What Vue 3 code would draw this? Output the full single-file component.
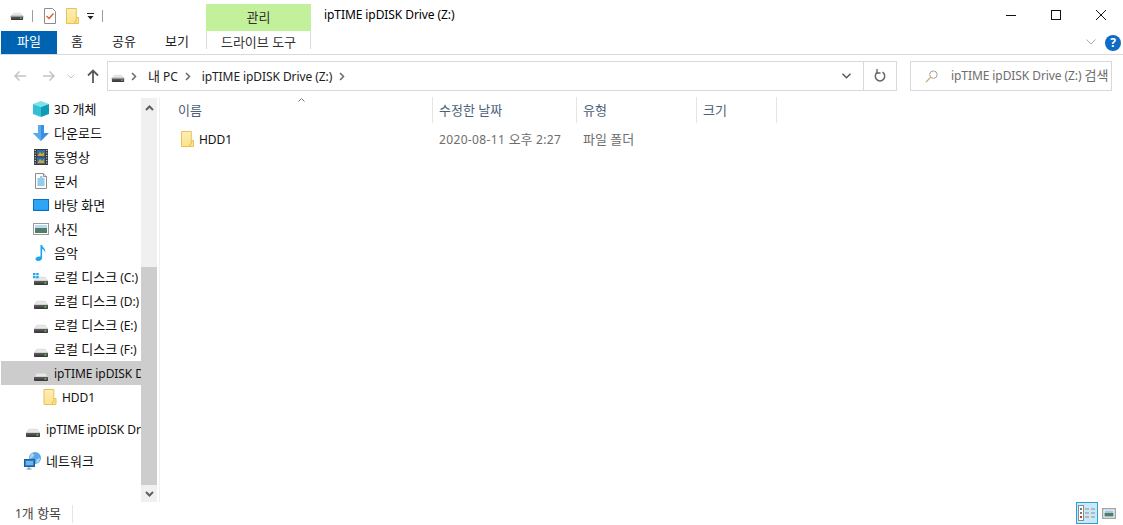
<script setup>
import { h } from 'vue'

// hangul is set a bit larger than latin, like the original system font
const T = (props) =>
  h('span', props.t.split(/([가-힣]+(?: [가-힣]+)*)/).filter(Boolean).map((part) =>
    /[가-힣]/.test(part) ? h('span', { class: 'ko' }, part) : part
  ))
T.props = ['t']

const nav = [
  { label: '3D 개체', icon: 'cube' },
  { label: '다운로드', icon: 'down' },
  { label: '동영상', icon: 'film' },
  { label: '문서', icon: 'doc' },
  { label: '바탕 화면', icon: 'desk' },
  { label: '사진', icon: 'pic' },
  { label: '음악', icon: 'music' },
  { label: '로컬 디스크 (C:)', icon: 'win' },
  { label: '로컬 디스크 (D:)', icon: 'drive' },
  { label: '로컬 디스크 (E:)', icon: 'drive' },
  { label: '로컬 디스크 (F:)', icon: 'drive' },
  { label: 'ipTIME ipDISK Drive (Z:)', icon: 'drive', active: true },
  { label: 'HDD1', icon: 'folder', child: true }
]

const columns = [
  { label: '이름', width: 263 },
  { label: '수정한 날짜', width: 144 },
  { label: '유형', width: 120 },
  { label: '크기', width: 80 }
]
</script>

<template>
  <div class="win">
    <svg class="sprite" width="0" height="0">
      <defs>
        <linearGradient id="hdd" x1="0" y1="0" x2="0" y2="1">
          <stop offset="0" stop-color="#6a6a6a" />
          <stop offset="1" stop-color="#333" />
        </linearGradient>
        <linearGradient id="fold" x1="0" y1="0" x2="0" y2="1">
          <stop offset="0" stop-color="#fdeeb8" />
          <stop offset="1" stop-color="#fde28a" />
        </linearGradient>
        <symbol id="drive" viewBox="0 0 16 16">
          <path d="M1.500 11.500 3.800 8.300h8.400l2.300 3.200z" fill="#e9e9e9" stroke="#cfcfcf" stroke-width=".6" />
          <rect x="1" y="11" width="14" height="5" rx=".8" fill="url(#hdd)" />
          <rect x="1" y="11" width="14" height="1" fill="#d2d2d2" />
          <rect x="11.500" y="13.300" width="1.800" height="1.300" fill="#5ddc55" />
        </symbol>
        <symbol id="win" viewBox="0 0 16 16">
          <path d="M1.500 11.500 3.800 8.300h8.400l2.300 3.200z" fill="#e9e9e9" stroke="#cfcfcf" stroke-width=".6" />
          <rect x="1" y="11" width="14" height="5" rx=".8" fill="url(#hdd)" />
          <rect x="1" y="11" width="14" height="1" fill="#d2d2d2" />
          <rect x="11.500" y="13.300" width="1.800" height="1.300" fill="#5ddc55" />
          <path d="M0 4h2.500v2.300H0zM3.200 4h2.500v2.300H3.200zM0 7h2.500v2.300H0zM3.200 7h2.500v2.300H3.200z" fill="#1ea7ee" />
        </symbol>
        <symbol id="folder" viewBox="0 0 13 16">
          <path d="M.5.500h9.800v9h2.200v6H.5z" fill="url(#fold)" stroke="#e8c352" />
          <path d="M10.300 9.500v3.500H9v2.500" fill="none" stroke="#e8c352" />
        </symbol>
        <symbol id="cube" viewBox="0 0 16 16">
          <path d="M8 0 16 3 8 6 0 3z" fill="#7fe0e8" />
          <path d="M0 3 8 6v10L0 13z" fill="#35bfd6" />
          <path d="M16 3 8 6v10l8-3z" fill="#0f9bb8" />
        </symbol>
        <symbol id="down" viewBox="0 0 16 16">
          <path d="M5 0h6v8h5l-8 8-8-8h5z" fill="#3a8fe0" />
          <path d="M5 0h3v16L0 8h5z" fill="#5aa9ee" />
        </symbol>
        <symbol id="film" viewBox="0 0 16 16">
          <rect x="1" y="0" width="14" height="16" fill="#3c3c3c" />
          <path d="M1.800 1h1v1h-1zM1.800 3.500h1v1h-1zM1.800 6h1v1h-1zM1.800 8.500h1v1h-1zM1.800 11h1v1h-1zM1.800 13.500h1v1h-1zM13.200 1h1v1h-1zM13.200 3.500h1v1h-1zM13.200 6h1v1h-1zM13.200 8.500h1v1h-1zM13.200 11h1v1h-1zM13.200 13.500h1v1h-1z" fill="#e8e8e8" />
          <rect x="4" y="1" width="8" height="6.500" fill="#2d6fb0" />
          <rect x="4" y="8.500" width="8" height="6.500" fill="#2d6fb0" />
          <path d="M5 6 7 3l2 2 2-2v4H5zM5 13l2-3 2 2 2-2v4H5z" fill="#d3a32b" />
        </symbol>
        <symbol id="doc" viewBox="0 0 16 16">
          <path d="M2.500.5h8l3 3v12h-11z" fill="#fdfdfd" stroke="#8c8c8c" />
          <path d="M10.500.5v3h3" fill="#e4e4e4" stroke="#8c8c8c" />
          <path d="M7 4h2.500M4.500 6h7M4.500 8h7M4.500 10h7M4.500 12h7" stroke="#2a9ad8" fill="none" />
        </symbol>
        <symbol id="desk" viewBox="0 0 16 16">
          <rect x="0" y="2" width="16" height="12" fill="#0b6fc6" />
          <rect x="1" y="3" width="14" height="9.800" fill="#2ea6f6" />
        </symbol>
        <symbol id="pic" viewBox="0 0 16 16">
          <rect x=".5" y="2.500" width="15" height="11" fill="#fff" stroke="#9a9a9a" />
          <rect x="2" y="4" width="12" height="4" fill="#bcd9ef" />
          <rect x="2" y="7" width="12" height="5" fill="#4f7f6a" />
        </symbol>
        <symbol id="music" viewBox="0 0 16 16">
          <path d="M7.500 0h1.600c.3 2.600 3.900 3.300 3 7.500-.5-2-2-3.300-3-3.500v9c0 2-2 3-4 3-1.500 0-2.600-.8-2.600-2 0-1.500 1.800-2.600 3.600-2.600.5 0 1 .1 1.400.2z" fill="#1aa5ef" />
        </symbol>
        <symbol id="net" viewBox="0 0 18 18">
          <circle cx="11" cy="6" r="6" fill="#5ba6e6" />
          <path d="M8 1c2 1 3 3 1 4S6 8 6 6s1-4 2-5zM13 7l3-1c0 3-2 5-3 5s-1-2 0-4z" fill="#a8d4f2" />
          <rect x="0.500" y="7.500" width="10" height="7" fill="#2f7ec8" stroke="#1d5f9c" />
          <rect x="2" y="9" width="7" height="4" fill="#6fb6ea" />
          <path d="M5 15v1.500M2.500 17h5" stroke="#6f93ae" stroke-width="1.200" />
        </symbol>
      </defs>
    </svg>

    <header class="titlebar">
      <div class="qat">
        <svg class="qat-drive"><use href="#drive" /></svg>
        <i class="qat-sep"></i>
        <svg class="qat-check" viewBox="0 0 12 16">
          <path d="M.5.5h8l3 3v12H.5z" fill="#fff" stroke="#8c8c8c" />
          <path d="M2.500 8 5 10.500 9.500 5.500" fill="none" stroke="#e2582b" stroke-width="1.300" />
        </svg>
        <svg class="qat-folder"><use href="#folder" /></svg>
        <svg class="qat-more" viewBox="0 0 7 7">
          <path d="M0 0h7v1H0zM.5 3h6L3.500 6.500z" fill="#222" />
        </svg>
        <i class="qat-sep last"></i>
      </div>
      <div class="context-tab"><T t="관리" /></div>
      <div class="title">ipTIME ipDISK Drive (Z:)</div>
      <div class="controls">
        <span class="ctl"><svg viewBox="0 0 10 10" width="10" height="10"><path d="M0 5.500h10" stroke="#111" /></svg></span>
        <span class="ctl"><svg viewBox="0 0 10 10" width="10" height="10"><rect x=".5" y=".5" width="9" height="9" fill="none" stroke="#111" /></svg></span>
        <span class="ctl"><svg viewBox="0 0 10 10" width="10" height="10"><path d="M0 0l10 10M10 0 0 10" stroke="#111" /></svg></span>
      </div>
    </header>

    <nav class="tabs">
      <span class="tab file"><T t="파일" /></span>
      <span class="tab home"><T t="홈" /></span>
      <span class="tab share"><T t="공유" /></span>
      <span class="tab view"><T t="보기" /></span>
      <span class="tab tool"><T t="드라이브 도구" /></span>
      <span class="spacer"></span>
      <svg class="ribbon-chev" viewBox="0 0 10 6" width="10" height="6"><path d="M.5.500 5 5 9.500.5" fill="none" stroke="#a8a8a8" /></svg>
      <span class="help">?</span>
    </nav>

    <div class="addrbar">
      <svg class="nav-btn" viewBox="0 0 14 12" width="14" height="12"><path d="M13 6H2M6.500 1.500 2 6l4.500 4.500" fill="none" stroke="#c4c4c4" stroke-width="1.500" /></svg>
      <svg class="nav-btn fwd" viewBox="0 0 14 12" width="14" height="12"><path d="M1 6h11M7.500 1.500 12 6l-4.500 4.500" fill="none" stroke="#c4c4c4" stroke-width="1.500" /></svg>
      <svg class="nav-btn recent" viewBox="0 0 8 5" width="8" height="5"><path d="M.5.500 4 4 7.500.5" fill="none" stroke="#c4c4c4" /></svg>
      <svg class="nav-btn up" viewBox="0 0 12 14" width="12" height="14"><path d="M6 14V2M1 6.500 6 1.500l5 5" fill="none" stroke="#5a5a5a" stroke-width="1.800" /></svg>
      <div class="path">
        <svg class="path-icon"><use href="#drive" /></svg>
        <span class="crumb-arrow"><svg viewBox="0 0 6 9" width="6" height="9"><path d="M1 1l3.500 3.500L1 8" fill="none" stroke="#6a6a6a" stroke-width="1.500" /></svg></span>
        <span class="crumb"><T t="내 PC" /></span>
        <span class="crumb-arrow"><svg viewBox="0 0 6 9" width="6" height="9"><path d="M1 1l3.500 3.500L1 8" fill="none" stroke="#6a6a6a" stroke-width="1.500" /></svg></span>
        <span class="crumb">ipTIME ipDISK Drive (Z:)</span>
        <span class="crumb-arrow"><svg viewBox="0 0 6 9" width="6" height="9"><path d="M1 1l3.500 3.500L1 8" fill="none" stroke="#6a6a6a" stroke-width="1.500" /></svg></span>
        <span class="spacer"></span>
        <svg class="path-chev" viewBox="0 0 9 6" width="9" height="6"><path d="M.5.800 4.500 4.800 8.500.8" fill="none" stroke="#555" stroke-width="1.400" /></svg>
        <span class="refresh">
          <svg viewBox="0 0 12 14" width="12" height="14"><path d="M3.500 3.200a4.700 4.700 0 1 0 5 0" fill="none" stroke="#666" stroke-width="1.500" /><path d="M3 0v4h3.500" fill="none" stroke="#666" stroke-width="1.400" /></svg>
        </span>
      </div>
      <div class="search">
        <svg viewBox="0 0 14 14" width="13" height="13"><circle cx="9" cy="5" r="4" fill="none" stroke="#9a9a9a" /><path d="M6 8 1 13" stroke="#c9a06a" stroke-width="1.300" /></svg>
        <T t="ipTIME ipDISK Drive (Z:) 검색" />
      </div>
    </div>

    <main class="body">
      <aside class="sidebar">
        <ul class="tree">
          <li v-for="item in nav" :key="item.label" class="node" :class="{ active: item.active, child: item.child }">
            <svg class="node-icon"><use :href="'#' + item.icon" /></svg>
            <T class="node-text" :t="item.label" />
          </li>
          <li class="node gap outdent">
            <svg class="node-icon"><use href="#drive" /></svg>
            <span class="node-text">ipTIME ipDISK Drive (Y:)</span>
          </li>
          <li class="node gap outdent">
            <svg class="node-icon net"><use href="#net" /></svg>
            <T class="node-text" t="네트워크" />
          </li>
        </ul>
        <div class="scrollbar">
          <svg class="sb-arrow first" viewBox="0 0 9 6" width="9" height="6"><path d="M1 5 4.500 1.500 8 5" fill="none" stroke="#5f5f5f" stroke-width="2" /></svg>
          <div class="track"><div class="thumb"></div></div>
          <svg class="sb-arrow" viewBox="0 0 9 6" width="9" height="6"><path d="M1 1 4.500 4.500 8 1" fill="none" stroke="#5f5f5f" stroke-width="2" /></svg>
        </div>
      </aside>

      <section class="list">
        <div class="list-head">
          <div v-for="col in columns" :key="col.label" class="col" :style="{ width: col.width + 'px' }"><T :t="col.label" /></div>
          <svg class="sort" viewBox="0 0 7 4" width="7" height="4"><path d="M.5 3.500 3.500.5l3 3" fill="none" stroke="#777" /></svg>
        </div>
        <div class="row">
          <div class="cell name" :style="{ width: columns[0].width + 'px' }">
            <svg class="row-icon"><use href="#folder" /></svg>
            <span class="name-text">HDD1</span>
          </div>
          <div class="cell muted date" :style="{ width: columns[1].width + 'px' }"><T t="2020-08-11 오후 2:27" /></div>
          <div class="cell muted"><T t="파일 폴더" /></div>
        </div>
      </section>
    </main>

    <footer class="status">
      <span class="count"><T t="1개 항목" /></span>
      <span class="spacer"></span>
      <span class="view-btn on">
        <svg viewBox="0 0 18 16" width="18" height="16">
          <rect x=".5" y=".5" width="5" height="15" fill="#fff" stroke="#8c8c8c" />
          <path d="M2 3h2v2H2zM2 7h2v2H2z" fill="#777" /><path d="M2 11h2v2H2z" fill="#c0392b" />
          <path d="M7 4h4M13 4h4M7 8h4M13 8h4M7 12h4M13 12h4" stroke="#8c8c8c" />
        </svg>
      </span>
      <span class="view-btn">
        <svg viewBox="0 0 14 11" width="14" height="11">
          <rect x=".7" y=".7" width="12.600" height="9.600" fill="#fff" stroke="#a4a4a4" stroke-width="1.400" />
          <rect x="2.500" y="2.500" width="9" height="2.500" fill="#9ec9ec" />
          <rect x="2.500" y="5" width="9" height="3.500" fill="#4f7f6a" />
        </svg>
      </span>
    </footer>
  </div>
</template>

<style>
html,
body {
  margin: 0;
  background: #fff;
}

.ko {
  font-size: 13px;
  line-height: 1;
  letter-spacing: 0;
}
</style>

<style scoped>
.win {
  width: 1123px;
  height: 525px;
  display: flex;
  flex-direction: column;
  overflow: hidden;
  background: #fff;
  color: #000;
  font-family: "Noto Sans", "Noto Sans CJK KR", sans-serif;
  font-size: 12px;
  line-height: 16px;
  letter-spacing: -0.08px;
}

.sprite {
  position: absolute;
}

.spacer {
  flex: 1;
}

.titlebar {
  height: 31px;
  display: flex;
  align-items: flex-end;
  flex: none;
}

.qat {
  width: 206px;
  height: 27px;
  display: flex;
  align-items: center;
  box-sizing: border-box;
  padding: 0 0 3px 10px;
}

.qat-drive {
  width: 14px;
  height: 14px;
  margin-bottom: 6px;
}

.qat-sep {
  width: 1px;
  height: 12px;
  background: #9f9f9f;
  margin: 0 11px 0 8px;
}

.qat-sep.last {
  margin: 0 0 0 8px;
}

.qat-check {
  width: 12px;
  height: 16px;
  margin-right: 10px;
}

.qat-folder {
  width: 13px;
  height: 16px;
  margin-right: 8px;
}

.qat-more {
  width: 7px;
  height: 7px;
}

.context-tab {
  width: 105px;
  height: 27px;
  line-height: 27px;
  text-align: center;
  background: #c3f19b;
  color: #333;
}

.title {
  margin-left: 13px;
  height: 27px;
  line-height: 22px;
  flex: 1;
}

.controls {
  display: flex;
  align-self: flex-start;
}

.ctl {
  width: 45px;
  height: 30px;
  display: flex;
  align-items: center;
  justify-content: center;
}

.tabs {
  height: 23px;
  flex: none;
  display: flex;
  align-items: flex-start;
  border-bottom: 1px solid #dadada;
}

.tab {
  height: 23px;
  line-height: 22px;
  text-align: center;
  color: #222;
}

.tab.file {
  width: 56px;
  margin-left: 1px;
  background: #0063b1;
  color: #fff;
}

.tab.home {
  width: 40px;
}

.tab.share {
  width: 54px;
}

.tab.view {
  width: 52px;
}

.tab.tool {
  width: 105px;
  height: 18px;
  line-height: 24px;
  margin-left: 3px;
  box-sizing: border-box;
  border: 1px solid #dadada;
  border-width: 0 1px;
  color: #333;
}

.ribbon-chev {
  margin: 8px 9px 0 0;
}

.help {
  width: 16px;
  height: 16px;
  margin: 4px 2px 0 0;
  border-radius: 50%;
  background: #0f6cc4;
  color: #fff;
  font-weight: 700;
  line-height: 16px;
  text-align: center;
}

.addrbar {
  height: 30px;
  margin-top: 6px;
  flex: none;
  display: flex;
  align-items: center;
}

.nav-btn {
  flex: none;
  margin-left: 13px;
}

.nav-btn.fwd {
  margin-left: 15px;
}

.nav-btn.recent {
  margin-left: 11px;
}

.nav-btn.up {
  margin-left: 12px;
}

.path {
  width: 790px;
  height: 30px;
  margin-left: 8px;
  box-sizing: border-box;
  border: 1px solid #d9d9d9;
  display: flex;
  align-items: center;
  padding-left: 3px;
}

.path-icon {
  width: 14px;
  height: 14px;
  margin-bottom: 3px;
}

.crumb-arrow {
  width: 18px;
  display: flex;
  justify-content: center;
}

.crumb {
  padding: 2px 1px 0 5px;
  color: #222;
}

.path-chev {
  margin-right: 12px;
}

.refresh {
  width: 32px;
  height: 28px;
  border-left: 1px solid #d9d9d9;
  display: flex;
  align-items: center;
  justify-content: center;
}

.search {
  width: 202px;
  height: 30px;
  margin-left: 13px;
  box-sizing: border-box;
  border: 1px solid #d9d9d9;
  display: flex;
  align-items: center;
  gap: 13px;
  padding-left: 14px;
  color: #6d6d6d;
  white-space: nowrap;
  overflow: hidden;
}

.body {
  flex: 1;
  display: flex;
  margin-top: 6px;
  min-height: 0;
}

.sidebar {
  width: 159px;
  height: 405px;
  display: flex;
  border-right: 1px solid #f0f0f0;
  flex: none;
}

.tree {
  width: 141px;
  margin: 0;
  padding: 0;
  list-style: none;
  overflow: hidden;
  flex: none;
}

.node {
  height: 24px;
  display: flex;
  align-items: center;
  padding-left: 33px;
  white-space: nowrap;
  overflow: hidden;
}

.node.active {
  background: #cccccc;
  margin-left: 1px;
  padding-left: 32px;
}

.node.child {
  padding-left: 43px;
}

.node.gap {
  margin-top: 8px;
}

.node.outdent {
  padding-left: 25px;
}

.node-icon {
  width: 16px;
  height: 16px;
  flex: none;
  margin-right: 5px;
}

.node-icon.net {
  width: 18px;
  height: 18px;
  margin-left: -1px;
  margin-right: 4px;
}

.node.child .node-icon {
  width: 14px;
  margin-right: 5px;
}

.node-text {
  color: #111;
  padding-top: 2px;
}

.scrollbar {
  width: 16px;
  margin-top: 1px;
  flex: none;
  display: flex;
  flex-direction: column;
  align-items: center;
  background: #f0f0f0;
}

.sb-arrow {
  flex: none;
  margin: 6px 0 5px;
}

.sb-arrow.first {
  margin: 7px 0 4px;
}

.track {
  width: 100%;
  flex: 1;
  position: relative;
}

.thumb {
  position: absolute;
  left: 0;
  right: 0;
  top: 152px;
  bottom: 0;
  background: #cdcdcd;
}

.list {
  flex: 1;
  margin-left: 10px;
}

.list-head {
  height: 26px;
  display: flex;
  position: relative;
}

.col {
  box-sizing: border-box;
  border-right: 1px solid #e5e5e5;
  padding-left: 6px;
  line-height: 28px;
  color: #4c607a;
  flex: none;
}

.col:first-child {
  padding-left: 8px;
}

.sort {
  position: absolute;
  left: 128px;
  top: 1px;
}

.row {
  height: 22px;
  margin-top: 5px;
  display: flex;
  align-items: center;
}

.cell {
  flex: none;
  box-sizing: border-box;
  padding: 2px 0 0 6px;
}

.cell.name {
  display: flex;
  align-items: center;
  padding: 0 0 0 11px;
  color: #111;
}

.name-text {
  padding-top: 2px;
}

.row-icon {
  width: 13px;
  height: 16px;
  margin-right: 5px;
}

.muted {
  color: #6d6d6d;
}

.date {
  letter-spacing: 0.35px;
}

.status {
  height: 22px;
  margin-bottom: 1px;
  flex: none;
  display: flex;
  align-items: center;
  padding: 0 3px 0 15px;
  color: #444;
}

.count {
  padding-right: 11px;
  margin-top: 2px;
  border-right: 1px solid #e5e5e5;
  line-height: 18px;
}

.view-btn {
  width: 22px;
  height: 22px;
  display: flex;
  align-items: center;
  justify-content: center;
  box-sizing: border-box;
}

.view-btn.on {
  background: #cce8f6;
  border: 1px solid #26a0da;
}
</style>
